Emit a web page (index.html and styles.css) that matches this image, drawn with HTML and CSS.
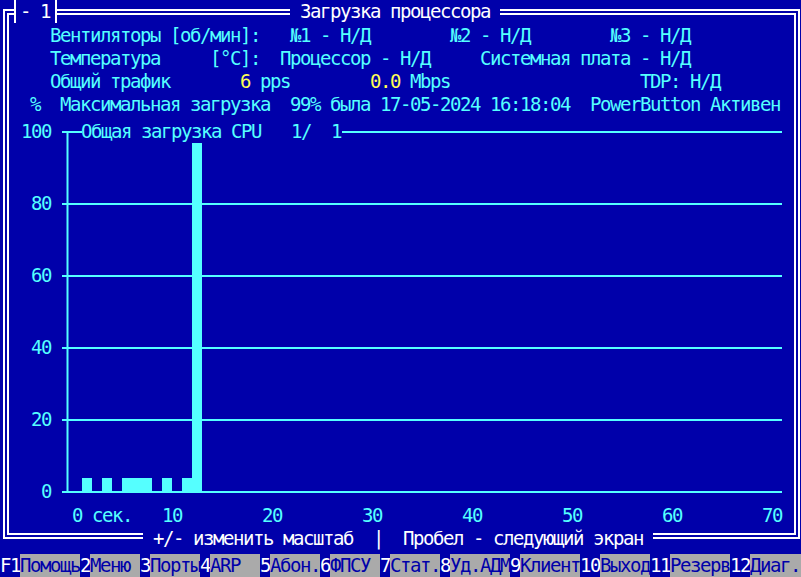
FILE: index.html
```html
<!DOCTYPE html>
<html lang="ru">
<head>
<meta charset="utf-8">
<title>Загрузка процессора</title>
<link rel="stylesheet" href="styles.css">
</head>
<body>
<div class="screen">
  <div class="frame">
    <div class="tag">- 1</div>
    <div class="title">Загрузка процессора</div>
    <div class="header">
      <div class="line">    Вентиляторы [об/мин]:   №1 - Н/Д        №2 - Н/Д        №3 - Н/Д</div>
      <div class="line">    Температура     [°C]:  Процессор - Н/Д     Системная плата - Н/Д</div>
      <div class="line">    Общий трафик       <span class="y">6</span> pps        <span class="y">0.0</span> Mbps                   TDP: Н/Д</div>
      <div class="line">  %  Максимальная загрузка  99% была 17-05-2024 16:18:04  PowerButton Активен</div>
    </div>
    <svg class="chart" viewBox="9 116 785 417" width="785" height="417" xmlns="http://www.w3.org/2000/svg">
      <g class="grid">
        <rect x="62" y="131" width="20" height="2"/>
        <rect x="342" y="131" width="440" height="2"/>
        <rect x="62" y="203" width="720" height="2"/>
        <rect x="62" y="275" width="720" height="2"/>
        <rect x="62" y="347" width="720" height="2"/>
        <rect x="62" y="419" width="720" height="2"/>
        <rect x="62" y="491" width="720" height="2"/>
        <rect x="66.5" y="131" width="2" height="362"/>
      </g>
      <g class="bars">
        <rect x="82" y="478" width="10" height="13"/>
        <rect x="102" y="478" width="10" height="13"/>
        <rect x="122" y="478" width="30" height="13"/>
        <rect x="162" y="478" width="10" height="13"/>
        <rect x="182" y="478" width="10" height="13"/>
        <rect x="192" y="143" width="10" height="348"/>
      </g>
      <g class="labels">
        <text x="81" y="138">Общая загрузка CPU</text>
        <text x="291" y="138">1/</text>
        <text x="331" y="138">1</text>
        <text x="21" y="138">100</text>
        <text x="31" y="210">80</text>
        <text x="31" y="282">60</text>
        <text x="31" y="354">40</text>
        <text x="31" y="426">20</text>
        <text x="41" y="498">0</text>
        <text x="72" y="521.5">0</text>
        <text x="92" y="521.5">сек.</text>
        <text x="162" y="521.5">10</text>
        <text x="262" y="521.5">20</text>
        <text x="362" y="521.5">30</text>
        <text x="462" y="521.5">40</text>
        <text x="562" y="521.5">50</text>
        <text x="662" y="521.5">60</text>
        <text x="762" y="521.5">70</text>
      </g>
    </svg>
    <div class="hint">+/- изменить масштаб  |  Пробел - следующий экран</div>
  </div>
  <div class="fkeys"><span class="k">F1</span><span class="l">Помощь</span><span class="k">2</span><span class="l">Меню </span><span class="k">3</span><span class="l">Порты</span><span class="k">4</span><span class="l">ARP  </span><span class="k">5</span><span class="l">Абон.</span><span class="k">6</span><span class="l">ФПСУ </span><span class="k">7</span><span class="l">Стат.</span><span class="k">8</span><span class="l">Уд.АДМ</span><span class="k">9</span><span class="l">Клиент</span><span class="k">10</span><span class="l">Выход</span><span class="k">11</span><span class="l">Резерв</span><span class="k">12</span><span class="l last">Диаг.</span></div>
</div>
</body>
</html>
```

FILE: styles.css
```css
html, body {
  margin: 0;
  padding: 0;
  background: #0000aa;
}

body {
  width: 801px;
  height: 577px;
  overflow: hidden;
}

.screen {
  width: 801px;
  height: 577px;
  background: #0000aa;
  display: flex;
  flex-direction: column;
  font-family: "DejaVu Sans Mono", "Liberation Mono", monospace;
  font-size: 19px;
  letter-spacing: -1.44px;
  line-height: 23px;
  color: #55ffff;
}

.frame {
  position: relative;
  box-sizing: border-box;
  margin: 9px 1px 0 3px;
  height: 530px;
  flex-shrink: 0;
  border: 6px double #ffffff;
  display: flex;
  flex-direction: column;
}

.tag,
.title,
.hint,
.line,
.k,
.l {
  white-space: pre;
}

.tag {
  position: absolute;
  top: -15px;
  left: 5px;
  height: 23px;
  padding: 0 5px 0 4px;
  border-left: 2px solid #ffffff;
  border-right: 2px solid #ffffff;
  background: #0000aa;
  color: #ffffff;
}

.title {
  position: absolute;
  top: -15px;
  left: 281px;
  height: 23px;
  padding: 0 10px;
  background: #0000aa;
  color: #ffffff;
}

.header {
  padding: 9px 0 0 1px;
  flex-shrink: 0;
}

.line {
  height: 23px;
}

.y {
  color: #ffff55;
}

.chart {
  display: block;
  flex-shrink: 0;
  width: 785px;
  height: 417px;
}

.chart rect {
  fill: #55ffff;
}

.chart text {
  fill: #55ffff;
  font-family: "DejaVu Sans Mono", "Liberation Mono", monospace;
  font-size: 19px;
  letter-spacing: -1.44px;
}

.hint {
  position: absolute;
  bottom: -17px;
  left: 134px;
  height: 23px;
  padding: 0 10px;
  background: #0000aa;
  color: #ffffff;
}

.fkeys {
  margin-top: auto;
  display: flex;
  height: 23px;
  flex-shrink: 0;
}

.k {
  color: #ffffff;
  background: #0000aa;
}

.l {
  color: #0000aa;
  background: #aaaaaa;
}

.last {
  flex: 1;
}
```
